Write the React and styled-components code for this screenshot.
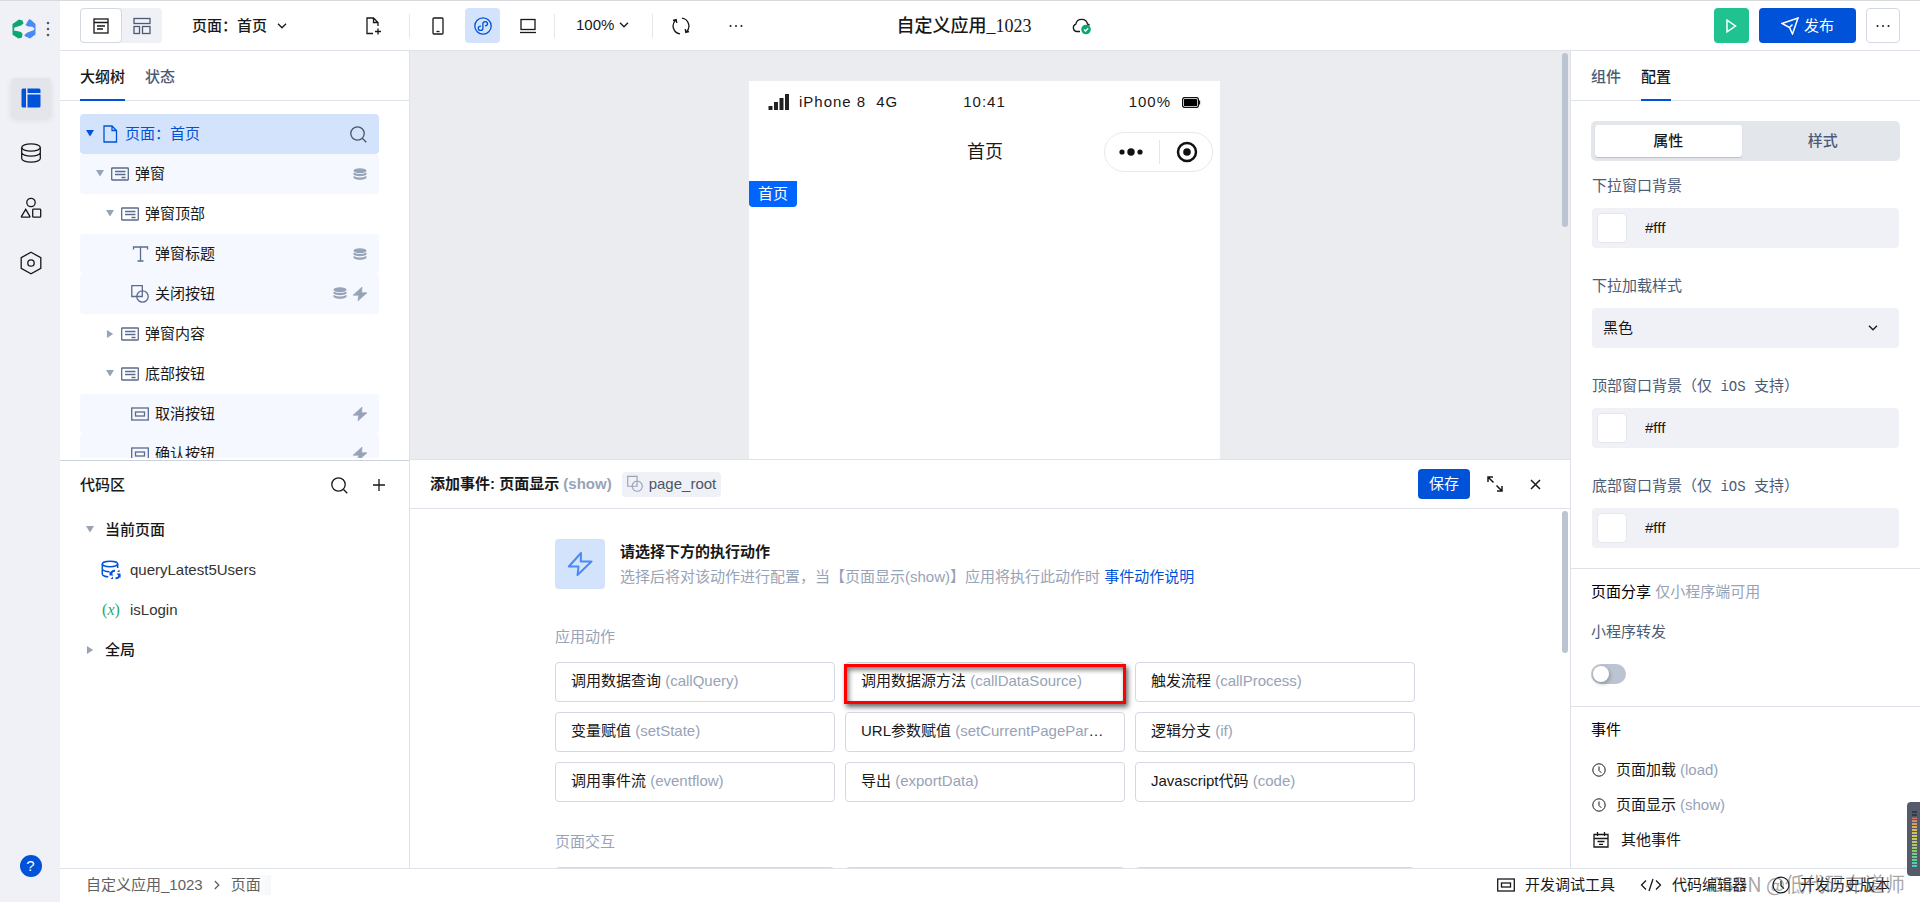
import React, { useState } from 'react';
import styled, { createGlobalStyle } from 'styled-components';

const outline = [
    { level: 1, icon: 'container', name: '弹窗', open: true, data: true, shade: true },
    { level: 2, icon: 'container', name: '弹窗顶部', open: true },
    { level: 3, icon: 'text', name: '弹窗标题', data: true, shade: true },
    { level: 3, icon: 'component', name: '关闭按钮', data: true, event: true, shade: true },
    { level: 2, icon: 'container', name: '弹窗内容', open: false },
    { level: 2, icon: 'container', name: '底部按钮', open: true },
    { level: 3, icon: 'button', name: '取消按钮', event: true, shade: true },
    { level: 3, icon: 'button', name: '确认按钮', event: true, shade: true },
];

const actions = [
    { name: '调用数据查询', code: '(callQuery)' },
    { name: '调用数据源方法', code: '(callDataSource)', marked: true },
    { name: '触发流程', code: '(callProcess)' },
    { name: '变量赋值', code: '(setState)' },
    { name: 'URL参数赋值', code: '(setCurrentPageParams)' },
    { name: '逻辑分支', code: '(if)' },
    { name: '调用事件流', code: '(eventflow)' },
    { name: '导出', code: '(exportData)' },
    { name: 'Javascript代码', code: '(code)' },
];

/* icons */

function Icon({ w = 18, h = 18, box, children }) {
    return (
        <svg width={w} height={h} viewBox={box || `0 0 ${w} ${h}`} fill="none" stroke="currentColor" strokeWidth="1.3" aria-hidden="true">
            {children}
        </svg>
    )
}

const Logo = () => (
    <Icon w={24} h={20}>
        <g stroke="none">
            <path fill="#0aa870" d="M0.500 5 7 0.500 10.500 1.500 11.500 4.500 9 6.500 2.500 8.500 1.800 11.500 6 12.300 9 13 10.500 15 10 18.500 6.500 19.500 0.500 15.800z" />
            <path fill="#4b8af4" d="M17 0.200 18.500 0.500 23.500 5V15.500L18 19.500 12.500 17 12.800 15.500 15.500 13.500 22 11 22.300 9.500 20.500 7.800 16 7.500 13.500 6z" />
        </g>
    </Icon>
);
const MoreDots = () => (
    <Icon w={16} h={16}>
        <g fill="currentColor" stroke="none">
            <circle cx="2.5" cy="8" r="1" /><circle cx="8" cy="8" r="1" /><circle cx="13.5" cy="8" r="1" />
        </g>
    </Icon>
);
const DragDots = () => (
    <Icon w={4} h={16}>
        <g fill="#4b5b76" stroke="none">
            <circle cx="2" cy="2" r="1.3" /><circle cx="2" cy="8" r="1.3" /><circle cx="2" cy="14" r="1.3" />
        </g>
    </Icon>
);
const LayoutSolid = () => (
    <Icon w={20} h={20}>
        <g fill="#0052d9" stroke="none">
            <path d="M2 0.5h3v19h-3a1.5 1.5 0 0 1-1.500-1.500v-16a1.500 1.500 0 0 1 1.500-1.500z" />
            <path d="M6.500 0.500h11.500a1.500 1.500 0 0 1 1.500 1.500v3h-13z" />
            <path d="M6.500 6.500h13v11.500a1.500 1.500 0 0 1-1.500 1.500h-11.500z" />
        </g>
    </Icon>
);
const Database = () => (
    <Icon w={22} h={20}>
        <ellipse cx="11" cy="4.500" rx="9.300" ry="3.700" />
        <path d="M1.700 4.500v11c0 2 4.200 3.700 9.300 3.700s9.300-1.700 9.300-3.700v-11M1.700 9.500c0 2 4.200 3.700 9.300 3.700s9.300-1.700 9.300-3.700" />
    </Icon>
);
const Shapes = () => (
    <Icon w={22} h={22}>
        <circle cx="11" cy="5.500" r="4.200" />
        <path d="M5.700 12.300 1.500 19.300q-0.400 0.900 0.600 0.900h7.200q1 0 0.600-0.900z" />
        <rect x="12.700" y="12.200" width="8" height="8" rx="0.800" />
    </Icon>
);
const Hexagon = () => (
    <Icon w={22} h={24}>
        <path d="M11 1.300 20.800 6.600v10.800L11 22.700 1.200 17.400V6.600z" />
        <circle cx="11" cy="12" r="3.200" />
    </Icon>
);
const PageView = () => (
    <Icon w={16} h={16}>
        <rect x="1" y="1" width="14" height="14" /><path d="M1 4.500h14M4 8h8M4 11h6" />
    </Icon>
);
const GridView = () => (
    <Icon w={18} h={18}>
        <rect x="1" y="1.500" width="16" height="5" /><rect x="1" y="9.500" width="5.500" height="7" /><rect x="9.500" y="9.500" width="7.500" height="7" />
    </Icon>
);
const Chevron = () => (
    <Icon w={10} h={6}><path d="M1 0.800 5 4.800 9 0.800" /></Icon>
);
const ChevronRight = () => (
    <Icon w={6} h={10}><path d="M0.800 1 4.800 5 0.800 9" /></Icon>
);
const FileAdd = () => (
    <Icon w={18} h={18}>
        <path d="M8 16.500H2V1h6.500L13 5.500V9M8.500 1v4.500H13M13 11.500v6M10 14.500h6" />
    </Icon>
);
const Phone = () => (
    <Icon w={12} h={18}><rect x="1" y="1" width="10" height="16" rx="1" /><path d="M4.500 14.500h3" /></Icon>
);
const MiniProgram = () => (
    <Icon w={18} h={18}>
        <circle cx="9" cy="9" r="8.200" />
        <path d="M7 9.200C5 9.200 4.300 10.200 4.300 11.200a2.300 2.200 0 0 0 4.600 0V6.800a2.300 2.200 0 0 1 4.600 0C13.500 8 12.700 8.700 11 8.800" />
    </Icon>
);
const Laptop = () => (
    <Icon w={18} h={16}><rect x="2" y="1.500" width="14" height="10" /><path d="M1 14.500h16" /></Icon>
);
const Refresh = () => (
    <Icon w={18} h={18}>
        <path d="M8 16.900A8 8 0 0 1 3.800 3M1 3.500 4.200 2.600 4.800 6M10 1.100A8 8 0 0 1 14.200 15M17 14.500 13.800 15.400 13.200 12" />
    </Icon>
);
const CloudOk = () => (
    <Icon w={20} h={18}>
        <path d="M8 14.500H4.500A3.800 3.800 0 0 1 3.800 7.200 6 6 0 0 1 15.500 7q1.500 0.400 2 1.500" />
        <circle cx="14" cy="12.500" r="4.800" fill="#0aa870" stroke="none" />
        <path d="M12 12.500 13.500 14 16.200 11.200" stroke="#fff" />
    </Icon>
);
const Play = () => (
    <Icon w={14} h={16}><path d="M3 2.200v11.600L11.500 8z" strokeWidth="1.500" /></Icon>
);
const Send = () => (
    <Icon w={18} h={18}><path d="M1 6.500 17 1 11.500 17 8.500 10.500zM8.500 10.500 11.500 7.500" strokeWidth="1.500" /></Icon>
);
const File = () => (
    <Icon w={18} h={18}><path d="M3 1h8l4.500 4.500V17H3zM11 1v4.500h4.500" /></Icon>
);
const Container = () => (
    <Icon w={18} h={14}>
        <rect x="0.700" y="1" width="16.600" height="12" rx="0.500" /><path d="M4 4.500h10.500M4 7.500h10.500M10.500 10.500h4" />
    </Icon>
);
const TextIcon = () => (
    <Icon w={18} h={16}><path d="M2.500 3.500V1h14v2.500M9.500 1v14M6.500 15h6" /></Icon>
);
const Component = () => (
    <Icon w={18} h={18}><path d="M6 11.500H0.800v-11h10.500V5" /><circle cx="11.500" cy="11.500" r="5.700" /><path d="M11.300 5v6.500H6" /></Icon>
);
const ButtonIcon = () => (
    <Icon w={18} h={14}><rect x="0.700" y="1" width="16.600" height="12" /><rect x="4.500" y="5" width="9" height="4" /></Icon>
);
const Stack = () => (
    <Icon w={14} h={12}>
        <g fill="currentColor" stroke="none">
            <ellipse cx="7" cy="2.700" rx="6.500" ry="2.500" />
            <path d="M0.500 4.500q6.500 3 13 0v2c-2 2.200-11 2.200-13 0zM0.500 8q6.500 3 13 0v2c-2 2.400-11 2.400-13 0z" />
        </g>
    </Icon>
);
const BoltSolid = () => (
    <Icon w={14} h={14}><path d="M9 0 0 8.300H5.500L5 14 14 5.700H8.700z" fill="currentColor" stroke="currentColor" strokeWidth="0.600" /></Icon>
);
const Bolt = () => (
    <Icon w={26} h={26}><path d="M14 2 1.800 15.500H11.500L10.500 24 24.500 10.500H13.800z" strokeWidth="2" strokeLinejoin="round" /></Icon>
);
const Search = () => (
    <Icon w={17} h={17}><circle cx="7.500" cy="7.500" r="6.700" /><path d="M12.500 12.500 16.300 16.300" /></Icon>
);
const Plus = () => (
    <Icon w={12} h={12}><path d="M6 0v12M0 6h12" /></Icon>
);
const QueryIcon = () => (
    <Icon w={20} h={20}>
        <ellipse cx="9" cy="4" rx="7.700" ry="2.700" strokeWidth="1.500" />
        <path d="M1.300 4v10c0 1.500 3 2.800 6 2.800M16.700 4v4M1.300 9c0 1.500 3.500 2.700 7 2.700" strokeWidth="1.500" />
        <path d="M10 14a4 4 0 0 1 4-3.200M18.500 14.800a4 4 0 0 1-4 3.500" strokeWidth="2" />
        <path d="M8.500 11v4.500h4zM19.500 18v-4.500h-4zM9.500 19h2.500v-2.500zM18.500 9.500v2.500h-2.500z" fill="currentColor" stroke="none" />
    </Icon>
);
const Expand = () => (
    <Icon w={16} h={16}><path d="M1 6V1h5M1 1l5.500 5.500M15 10v5h-5M15 15 9.500 9.500" strokeWidth="1.500" /></Icon>
);
const Close = () => (
    <Icon w={11} h={11}><path d="M1 1l9 9M10 1l-9 9" strokeWidth="1.500" /></Icon>
);
const Signal = () => (
    <Icon w={21} h={16}>
        <path d="M0.500 12h4v4h-4zM6 8h4v8H6zM11.500 4h4v12h-4zM17 0h4v16h-4z" fill="#222" stroke="none" />
    </Icon>
);
const Battery = () => (
    <Icon w={19} h={11}>
        <rect x="0.600" y="0.600" width="15.800" height="9.800" rx="2" stroke="#111" />
        <rect x="2" y="2" width="13" height="7" rx="0.500" fill="#000" stroke="none" /><path d="M17.500 3.500v4" />
    </Icon>
);
const CapsuleDots = () => (
    <Icon w={24} h={8}>
        <g fill="#111" stroke="none"><circle cx="3" cy="4" r="2.600" /><circle cx="12" cy="4" r="3.700" /><circle cx="21" cy="4" r="2.600" /></g>
    </Icon>
);
const Target = () => (
    <Icon w={22} h={22}><circle cx="11" cy="11" r="9" stroke="#111" strokeWidth="2.500" /><circle cx="11" cy="11" r="3.800" fill="#111" stroke="none" /></Icon>
);
const Clock = ({ size = 14 }) => (
    <Icon w={size} h={size} box="0 0 14 14"><circle cx="7" cy="7" r="6.200" strokeWidth="1" /><path d="M7 3.500V7.500L9.300 9.800" strokeWidth="1" /></Icon>
);
const Calendar = () => (
    <Icon w={16} h={16}><path d="M1 2.500h14V15H1zM1 6.500h14M4.500 0v4M11.500 0v4M4.500 9.500h7M6 12.300h4" /></Icon>
);
const CodeIcon = () => (
    <Icon w={22} h={14}><path d="M6 2.500 1.500 7 6 11.500M16 2.500 20.500 7 16 11.500M13 1 9 13" /></Icon>
);

const treeIcons = { container: Container, text: TextIcon, component: Component, button: ButtonIcon };

function TreeRow({ item }) {
    const RowIcon = treeIcons[item.icon];
    return (
        <Row $level={item.level} $shade={item.shade}>
            <Caret $open={item.open} $hidden={item.open === undefined} />
            <IconSlot><RowIcon /></IconSlot>
            <RowName>{item.name}</RowName>
            <RowMarks>
                {item.data && <Stack />}
                {item.event && <BoltSolid />}
            </RowMarks>
        </Row>
    )
}

function ColorField({ id, label, children }) {
    const [value, setValue] = useState('#fff');
    return (
        <Field>
            <FieldLabel htmlFor={id}>{label}{children}</FieldLabel>
            <FieldBox>
                <Swatch />
                <FieldInput id={id} value={value} onChange={e => setValue(e.target.value)} />
            </FieldBox>
        </Field>
    )
}

function Header() {
    return (
        <TopBar>
            <BarGroup>
                <PanelTools>
                    <ViewSwitch>
                        <ViewButton $active aria-label="页面"><PageView /></ViewButton>
                        <ViewButton aria-label="布局"><GridView /></ViewButton>
                    </ViewSwitch>
                    <PageName type="button">页面：首页 <Chevron /></PageName>
                    <ToolButton aria-label="新建页面"><FileAdd /></ToolButton>
                </PanelTools>
                <Divider />
                <Devices>
                    <ToolButton aria-label="手机"><Phone /></ToolButton>
                    <ToolButton $active aria-label="小程序"><MiniProgram /></ToolButton>
                    <ToolButton aria-label="电脑"><Laptop /></ToolButton>
                </Devices>
                <Divider />
                <Zoom type="button">100% <Chevron /></Zoom>
                <Divider />
                <ExtraTools>
                    <ToolButton aria-label="刷新"><Refresh /></ToolButton>
                    <ToolButton aria-label="更多"><MoreDots /></ToolButton>
                </ExtraTools>
            </BarGroup>
            <AppTitle>
                <h1>自定义应用_1023</h1>
                <CloudOk />
            </AppTitle>
            <BarActions>
                <RunButton aria-label="预览"><Play /></RunButton>
                <PublishButton type="button"><Send />发布</PublishButton>
                <MoreButton aria-label="更多"><MoreDots /></MoreButton>
            </BarActions>
        </TopBar>
    )
}

function App() {
    const [share, setShare] = useState(false);

    return (
        <Shell>
            <GlobalStyle />
            <SideNav>
                <Brand><Logo /><DragDots /></Brand>
                <NavButton $active aria-label="编辑"><LayoutSolid /></NavButton>
                <NavButton aria-label="数据"><Database /></NavButton>
                <NavButton aria-label="素材"><Shapes /></NavButton>
                <NavButton aria-label="设置"><Hexagon /></NavButton>
                <HelpButton type="button">?</HelpButton>
            </SideNav>
            <Main>
                <Header />
                <Workspace>
                    <LeftPanel>
                        <Tabs>
                            <Tab $active>大纲树</Tab>
                            <Tab>状态</Tab>
                        </Tabs>
                        <Tree>
                            <Row $level={0} $selected>
                                <Caret $open />
                                <IconSlot><File /></IconSlot>
                                <RowName>页面：首页</RowName>
                                <RowMarks><Search /></RowMarks>
                            </Row>
                            {outline.map(item => <TreeRow key={item.name} item={item} />)}
                        </Tree>
                        <CodePanel>
                            <CodeHead>
                                <h2>代码区</h2>
                                <PlainButton aria-label="搜索"><Search /></PlainButton>
                                <PlainButton aria-label="新增"><Plus /></PlainButton>
                            </CodeHead>
                            <CodeGroup><Caret $open />当前页面</CodeGroup>
                            <CodeItem><QueryIcon /><span>queryLatest5Users</span></CodeItem>
                            <CodeItem><Variable>(<i>x</i>)</Variable><span>isLogin</span></CodeItem>
                            <CodeGroup><Caret />全局</CodeGroup>
                        </CodePanel>
                    </LeftPanel>

                    <Center>
                        <Canvas>
                            <Device>
                                <StatusBar>
                                    <Carrier><Signal /><span>iPhone 8</span><span>4G</span></Carrier>
                                    <span>10:41</span>
                                    <Power>100%<Battery /></Power>
                                </StatusBar>
                                <NavBar>
                                    <NavTitle>首页</NavTitle>
                                    <Capsule><CapsuleDots /><CapsuleLine /><Target /></Capsule>
                                </NavBar>
                                <Selected>首页</Selected>
                            </Device>
                            <ScrollThumb $size={174} />
                        </Canvas>
                        <Drawer>
                            <DrawerHead>
                                <h2>添加事件: 页面显示 <Muted>(show)</Muted></h2>
                                <Chip><Component />page_root</Chip>
                                <SaveButton type="button">保存</SaveButton>
                                <PlainButton aria-label="展开"><Expand /></PlainButton>
                                <PlainButton aria-label="关闭"><Close /></PlainButton>
                            </DrawerHead>
                            <DrawerBody>
                                <DrawerContent>
                                    <Intro>
                                        <IntroIcon><Bolt /></IntroIcon>
                                        <div>
                                            <h3>请选择下方的执行动作</h3>
                                            <p>选择后将对该动作进行配置，当【页面显示(show)】应用将执行此动作时 <a href="#">事件动作说明</a></p>
                                        </div>
                                    </Intro>
                                    <SectionName>应用动作</SectionName>
                                    <Actions>
                                        {actions.map(a => (
                                            <ActionCard key={a.code} type="button">
                                                <ActionText>{a.name} <Muted>{a.code}</Muted></ActionText>
                                                {a.marked && <Marker />}
                                            </ActionCard>
                                        ))}
                                    </Actions>
                                    <SectionName>页面交互</SectionName>
                                    <Actions>
                                        <ActionCard type="button" aria-label="打开页面" />
                                        <ActionCard type="button" aria-label="返回页面" />
                                        <ActionCard type="button" aria-label="刷新页面" />
                                    </Actions>
                                </DrawerContent>
                                <ScrollThumb $size={142} />
                            </DrawerBody>
                        </Drawer>
                    </Center>

                    <RightPanel>
                        <Tabs>
                            <Tab>组件</Tab>
                            <Tab $active>配置</Tab>
                        </Tabs>
                        <Section>
                            <Segment>
                                <SegmentButton $active>属性</SegmentButton>
                                <SegmentButton>样式</SegmentButton>
                            </Segment>
                            <ColorField id="pull-bg" label="下拉窗口背景" />
                            <Field>
                                <FieldLabel htmlFor="pull-style">下拉加载样式</FieldLabel>
                                <FieldBox>
                                    <FieldSelect id="pull-style" defaultValue="black">
                                        <option value="black">黑色</option>
                                        <option value="white">白色</option>
                                    </FieldSelect>
                                    <Chevron />
                                </FieldBox>
                            </Field>
                            <ColorField id="top-bg" label="顶部窗口背景（仅"><Latin> iOS </Latin>支持）</ColorField>
                            <ColorField id="bottom-bg" label="底部窗口背景（仅"><Latin> iOS </Latin>支持）</ColorField>
                        </Section>
                        <Section>
                            <SectionTitle>页面分享 <Muted>仅小程序端可用</Muted></SectionTitle>
                            <ShareLabel htmlFor="share">小程序转发</ShareLabel>
                            <Switch id="share" type="checkbox" checked={share} onChange={e => setShare(e.target.checked)} />
                        </Section>
                        <Section>
                            <SectionTitle>事件</SectionTitle>
                            <Events>
                                <li><Clock />页面加载 <Muted>(load)</Muted></li>
                                <li><Clock />页面显示 <Muted>(show)</Muted></li>
                                <OtherEvent><Calendar />其他事件</OtherEvent>
                            </Events>
                        </Section>
                    </RightPanel>
                </Workspace>
                <Footer>
                    <Crumbs>
                        <span>自定义应用_1023</span>
                        <ChevronRight />
                        <Crumb>页面</Crumb>
                    </Crumbs>
                    <FootLink href="#"><ButtonIcon />开发调试工具</FootLink>
                    <FootLink href="#"><CodeIcon />代码编辑器</FootLink>
                    <FootLink href="#"><Clock size={18} />开发历史版本</FootLink>
                </Footer>
            </Main>
            <Meter><MeterBars /></Meter>
            <Watermark>CSDN @低代码布道师</Watermark>
        </Shell>
    )
}

export default App

const GlobalStyle = createGlobalStyle`
    *{
        box-sizing: border-box;
    }
    body{
        margin: 0;
        color: #181818;
        background-color: white;
        font-family: "Liberation Sans", "Noto Sans CJK SC", sans-serif;
        font-size: 15px;
        line-height: 20px;
    }
    button, input, select{
        font: inherit;
        color: inherit;
        padding: 0;
        border: 0;
        background: none;
    }
    button{
        cursor: pointer;
    }
    h1, h2, h3, p, ul{
        margin: 0;
        padding: 0;
        list-style: none;
        font-size: 15px;
    }
    a{
        color: #0052d9;
        text-decoration: none;
    }
    svg{
        flex: none;
        display: block;
    }
`
const Shell = styled.div`
    position: relative;
    display: flex;
    height: 100vh;
    border-top: 1px solid #d9dadc;
    overflow: hidden;
`
const SideNav = styled.nav`
    flex: none;
    width: 60px;
    display: flex;
    flex-direction: column;
    align-items: center;
    gap: 15px;
    padding: 18px 0 25px 1px;
    background-color: #f0f1f6;
`
const Brand = styled.div`
    display: flex;
    align-items: center;
    gap: 10px;
    height: 20px;
    margin-bottom: 24px;
`
const NavButton = styled.button`
    display: flex;
    align-items: center;
    justify-content: center;
    width: 40px;
    height: 40px;
    border-radius: 4px;
    background-color: ${props => props.$active ? '#e3e5eb' : 'transparent'};
    box-shadow: ${props => props.$active ? '0 2px 6px rgba(0,0,0,0.08)' : 'none'};
`
const HelpButton = styled.button`
    width: 22px;
    height: 22px;
    margin-top: auto;
    border-radius: 50%;
    color: white;
    background-color: #0052d9;
`
const Main = styled.div`
    flex: 1;
    min-width: 0;
    display: flex;
    flex-direction: column;
`
const TopBar = styled.header`
    flex: none;
    display: grid;
    grid-template-columns: 1fr auto 1fr;
    align-items: center;
    height: 50px;
    padding: 0 20px;
    border-bottom: 1px solid #dfe2e8;
`
const BarGroup = styled.div`
    display: flex;
    align-items: center;
`
const PanelTools = styled.div`
    flex: none;
    display: flex;
    align-items: center;
    width: 329px;
    padding-right: 18px;
`
const ViewSwitch = styled.div`
    display: flex;
    border-radius: 4px;
    background-color: #f0f1f6;
`
const ViewButton = styled.button`
    display: flex;
    align-items: center;
    justify-content: center;
    width: ${props => props.$active ? '42px' : '40px'};
    height: 35px;
    border-radius: 4px;
    border: ${props => props.$active ? '1px solid #d3d8e2' : '0'};
    background-color: ${props => props.$active ? 'white' : 'transparent'};
    color: ${props => props.$active ? '#181818' : '#4b5b76'};
`
const PageName = styled.button`
    display: flex;
    align-items: center;
    gap: 10px;
    margin: 0 auto 0 30px;
    font-weight: 500;
`
const ToolButton = styled.button`
    display: flex;
    align-items: center;
    justify-content: center;
    width: 35px;
    height: 35px;
    border-radius: 4px;
    color: ${props => props.$active ? '#0052d9' : '#181818'};
    background-color: ${props => props.$active ? '#d4e3fc' : 'transparent'};
`
const Divider = styled.span`
    flex: none;
    width: 1px;
    height: 24px;
    background-color: #e3e6eb;
`
const Devices = styled.div`
    display: flex;
    gap: 10px;
    padding: 0 9px 0 10px;
`
const Zoom = styled.button`
    display: flex;
    align-items: center;
    gap: 5px;
    padding: 0 23px 2px 21px;
`
const ExtraTools = styled.div`
    display: flex;
    gap: 20px;
    padding-left: 10px;
`
const AppTitle = styled.div`
    display: flex;
    align-items: center;
    gap: 40px;
    padding-left: 8px;
    h1{
        font-family: "Liberation Serif", "Noto Sans CJK SC", serif;
        font-size: 18px;
        font-weight: 500;
    }
`
const BarActions = styled.div`
    display: flex;
    justify-content: flex-end;
    gap: 10px;
`
const RunButton = styled(ToolButton)`
    color: white;
    background-color: #20c38f;
`
const PublishButton = styled.button`
    display: flex;
    align-items: center;
    gap: 5px;
    height: 35px;
    padding: 0 22px;
    border-radius: 4px;
    color: white;
    background-color: #0052d9;
`
const MoreButton = styled(ToolButton)`
    width: 34px;
    border: 1px solid #d3d8e2;
`
const Workspace = styled.div`
    flex: 1;
    min-height: 0;
    display: flex;
`
const LeftPanel = styled.aside`
    flex: none;
    width: 350px;
    display: flex;
    flex-direction: column;
    border-right: 1px solid #dfe2e8;
`
const Tabs = styled.div`
    flex: none;
    display: flex;
    gap: 20px;
    height: 50px;
    padding: 0 20px;
    border-bottom: 1px solid #dfe2e8;
`
const Tab = styled.button`
    height: 50px;
    padding-top: 4px;
    font-weight: 500;
    color: ${props => props.$active ? '#181818' : '#4b5b76'};
    border-bottom: 2px solid ${props => props.$active ? '#0052d9' : 'transparent'};
`
const Tree = styled.div`
    flex: 1;
    min-height: 0;
    overflow: hidden;
    margin: 13px 30px 2px 20px;
`
const Row = styled.div`
    display: flex;
    align-items: center;
    height: 40px;
    padding-left: ${props => 6 + props.$level * 10}px;
    padding-right: 12px;
    border-radius: 4px;
    color: ${props => props.$selected ? '#0052d9' : '#181818'};
    background-color: ${props => props.$selected ? '#d4e3fc' : props.$shade ? '#f5f8ff' : 'transparent'};
`
const Caret = styled.span`
    flex: none;
    width: 8px;
    height: 8px;
    visibility: ${props => props.$hidden ? 'hidden' : 'visible'};
    background-color: #97a3b7;
    clip-path: ${props => props.$open ? 'polygon(0 0, 100% 0, 50% 80%)' : 'polygon(12% 0, 90% 50%, 12% 100%)'};
    ${Row}:first-child &{
        background-color: #0052d9;
    }
`
const IconSlot = styled.span`
    display: flex;
    justify-content: center;
    width: 18px;
    margin: 0 6px 0 7px;
    color: #5b6b8c;
    ${Row}:first-child &{
        color: #0052d9;
    }
`
const RowName = styled.span`
    flex: 1;
`
const RowMarks = styled.span`
    display: flex;
    gap: 6px;
    color: #97a3b7;
    ${Row}:first-child &{
        color: #4b5563;
    }
`
const CodePanel = styled.section`
    flex: 0 0 408px;
    min-height: 0;
    padding: 4px 25px 0 20px;
    border-top: 1px solid #ccd3de;
`
const CodeHead = styled.div`
    display: flex;
    align-items: center;
    gap: 10px;
    height: 40px;
    h2{
        flex: 1;
        font-weight: 500;
    }
`
const PlainButton = styled.button`
    display: flex;
    align-items: center;
    justify-content: center;
    width: 30px;
    height: 30px;
    margin-right: -10px;
    &:not(:last-child){
        margin-right: 0;
    }
`
const CodeGroup = styled.div`
    display: flex;
    align-items: center;
    gap: 11px;
    height: 40px;
    margin-top: 5px;
    padding-left: 6px;
    font-weight: 500;
    & ~ &{
        margin-top: 0;
    }
`
const CodeItem = styled.div`
    display: flex;
    align-items: center;
    gap: 9px;
    height: 40px;
    padding-left: 21px;
    color: #0052d9;
    span:last-child{
        color: #333;
    }
`
const Variable = styled.span`
    width: 20px;
    text-align: center;
    font-family: "Liberation Serif", serif;
    font-size: 16px;
    color: #2ba471;
`
const Center = styled.main`
    flex: 1;
    min-width: 0;
    display: flex;
    flex-direction: column;
`
const Canvas = styled.div`
    position: relative;
    flex: 1;
    min-height: 0;
    overflow: hidden;
    padding: 30px 11px 0 0;
    background-color: #ebecf0;
`
const Device = styled.div`
    width: 471px;
    height: 100%;
    margin: 0 auto;
    background-color: white;
`
const StatusBar = styled.div`
    display: grid;
    grid-template-columns: 1fr auto 1fr;
    align-items: center;
    height: 42px;
    padding: 0 19px;
    letter-spacing: 1px;
`
const Carrier = styled.div`
    display: flex;
    align-items: center;
    gap: 10px;
`
const Power = styled.div`
    display: flex;
    align-items: center;
    justify-content: flex-end;
    gap: 11px;
`
const NavBar = styled.div`
    display: grid;
    grid-template-columns: 1fr auto 1fr;
    align-items: center;
    height: 58px;
    padding-right: 7px;
`
const NavTitle = styled.span`
    grid-column: 2;
    padding-left: 8px;
    font-size: 18px;
`
const Capsule = styled.div`
    justify-self: end;
    display: flex;
    align-items: center;
    gap: 16px;
    height: 40px;
    padding: 0 14px;
    border: 1px solid #e8e9ec;
    border-radius: 20px;
`
const CapsuleLine = styled.span`
    width: 1px;
    height: 24px;
    background-color: #e3e6eb;
`
const Selected = styled.span`
    display: inline-block;
    padding: 3px 9px;
    border-radius: 0 0 4px 4px;
    color: white;
    background-color: #0064ff;
`
const ScrollThumb = styled.span`
    position: absolute;
    top: 2px;
    right: 2px;
    width: 6px;
    height: ${props => props.$size}px;
    border-radius: 3px;
    background-color: #bbc4d0;
`
const Drawer = styled.section`
    flex: 0 0 409px;
    min-height: 0;
    display: flex;
    flex-direction: column;
    border-top: 1px solid #dfe2e8;
`
const DrawerHead = styled.div`
    flex: none;
    display: flex;
    align-items: center;
    gap: 10px;
    height: 49px;
    padding: 0 30px 0 20px;
    border-bottom: 1px solid #dfe2e8;
    h2{
        font-weight: 700;
    }
`
const Chip = styled.span`
    display: flex;
    align-items: center;
    gap: 6px;
    height: 25px;
    padding: 0 5px;
    border-radius: 4px;
    color: #4b5563;
    background-color: #f0f1f6;
    svg{
        width: 16px;
        color: #97a3b7;
    }
`
const SaveButton = styled.button`
    height: 30px;
    margin-left: auto;
    padding: 0 11px;
    border-radius: 4px;
    color: white;
    background-color: #0052d9;
`
const DrawerBody = styled.div`
    position: relative;
    flex: 1;
    min-height: 0;
    overflow: hidden;
    padding-right: 10px;
`
const DrawerContent = styled.div`
    max-width: 860px;
    margin: 0 auto;
    padding-top: 30px;
`
const Intro = styled.div`
    display: flex;
    gap: 15px;
    h3{
        padding: 3px 0;
        font-weight: 700;
    }
    p{
        line-height: 24px;
        color: #97a3b7;
    }
`
const IntroIcon = styled.span`
    display: flex;
    align-items: center;
    justify-content: center;
    width: 50px;
    height: 50px;
    border-radius: 4px;
    color: #4b8af4;
    background-color: #d4e3fc;
`
const SectionName = styled.p`
    padding: 38px 0 15px;
    color: #97a3b7;
    & ~ &{
        padding-top: 30px;
    }
`
const Actions = styled.div`
    display: grid;
    grid-template-columns: repeat(3, 1fr);
    gap: 10px;
`
const ActionCard = styled.button`
    position: relative;
    min-width: 0;
    height: 40px;
    padding: 0 15px 2px;
    border: 1px solid #d3d8e2;
    border-radius: 4px;
    text-align: left;
`
const ActionText = styled.span`
    display: block;
    overflow: hidden;
    white-space: nowrap;
    text-overflow: ellipsis;
`
const Muted = styled.span`
    color: #97a3b7;
`
const Marker = styled.span`
    position: absolute;
    top: 1px;
    left: -2px;
    right: -2px;
    height: 40px;
    border: 3px solid #fe0000;
    box-shadow: 2px 3px 5px rgba(0,0,0,0.6), inset 2px 3px 5px rgba(0,0,0,0.5);
`
const RightPanel = styled.aside`
    flex: none;
    width: 350px;
    border-left: 1px solid #dfe2e8;
`
const Section = styled.section`
    padding: 20px 20px 0;
    & + &{
        padding-top: 13px;
        border-top: 1px solid #dfe2e8;
    }
`
const Segment = styled.div`
    display: grid;
    grid-template-columns: 1fr 1fr;
    gap: 8px;
    padding: 4px;
    border-radius: 5px;
    background-color: #e3e6eb;
`
const SegmentButton = styled.button`
    height: 32px;
    border-radius: 3px;
    font-weight: 500;
    color: ${props => props.$active ? '#181818' : '#4b5b76'};
    background-color: ${props => props.$active ? 'white' : 'transparent'};
    box-shadow: ${props => props.$active ? '0 1px 1px #b5bfcc' : 'none'};
`
const Field = styled.div`
    padding: 15px 1px 20px;
    & + &{
        padding-top: 8px;
    }
`
const FieldLabel = styled.label`
    display: block;
    height: 20px;
    margin-bottom: 12px;
    color: #4b5b76;
`
const Latin = styled.span`
    font-family: "Liberation Mono", monospace;
    font-size: 14px;
    white-space: pre;
`
const FieldBox = styled.div`
    display: flex;
    align-items: center;
    height: 40px;
    padding: 0 21px 0 5px;
    border-radius: 4px;
    background-color: #f0f1f6;
`
const Swatch = styled.span`
    width: 30px;
    height: 30px;
    border: 1px solid #e3e6eb;
    border-radius: 4px;
    background-color: white;
`
const FieldInput = styled.input`
    flex: 1;
    min-width: 0;
    padding-left: 18px;
`
const FieldSelect = styled.select`
    flex: 1;
    appearance: none;
    padding-left: 6px;
`
const SectionTitle = styled.h3`
    font-weight: 400;
    color: #000;
`
const ShareLabel = styled.label`
    display: block;
    padding: 20px 0;
    color: #4b5b76;
`
const Switch = styled.input`
    appearance: none;
    display: block;
    width: 35px;
    height: 20px;
    margin: 2px 0 22px;
    padding: 2px;
    border-radius: 10px;
    background-color: ${props => props.checked ? '#0052d9' : '#bbc4d0'};
    &::before{
        content: "";
        display: block;
        width: 16px;
        height: 16px;
        border-radius: 50%;
        background-color: white;
        box-shadow: 1px 2px 4px rgba(0,0,0,0.25);
        margin-left: ${props => props.checked ? '15px' : '0'};
    }
`
const Events = styled.ul`
    padding-top: 12px;
    li{
        display: flex;
        align-items: center;
        gap: 4px;
        height: 35px;
    }
    svg{
        margin: 0 6px 0 1px;
    }
`
const OtherEvent = styled.li`
    svg{
        margin: 0 8px 0 2px;
    }
`
const Footer = styled.footer`
    flex: none;
    display: flex;
    align-items: center;
    gap: 25px;
    height: 34px;
    padding: 0 30px 2px 26px;
    border-top: 1px solid #dfe2e8;
`
const Crumbs = styled.div`
    display: flex;
    align-items: center;
    gap: 11px;
    margin-right: auto;
    color: #616161;
`
const Crumb = styled.span`
    padding-right: 10px;
    background-image: linear-gradient(to left, #f6f7f9, white 20px);
`
const FootLink = styled.a`
    display: flex;
    align-items: center;
    gap: 10px;
    color: #181818;
`
const Meter = styled.div`
    position: absolute;
    right: 0;
    bottom: 26px;
    width: 13px;
    height: 74px;
    padding: 8px 3px 8px 5px;
    border-radius: 4px 0 0 4px;
    background-color: #555b6b;
`
const MeterBars = styled.div`
    height: 100%;
    background-image:
        repeating-linear-gradient(#555b6b 0 1px, transparent 1px 3px),
        linear-gradient(#333947 0 7px, #d07a6c 8px, #d9b45c 18px, #c9cf62 28px, #86c877 42px, #3fd0b8 57px);
`
const Watermark = styled.span`
    position: absolute;
    right: 15px;
    bottom: 6px;
    font-family: "Noto Sans CJK SC", sans-serif;
    font-size: 20px;
    line-height: 24px;
    color: rgba(90,90,90,0.55);
    pointer-events: none;
`
